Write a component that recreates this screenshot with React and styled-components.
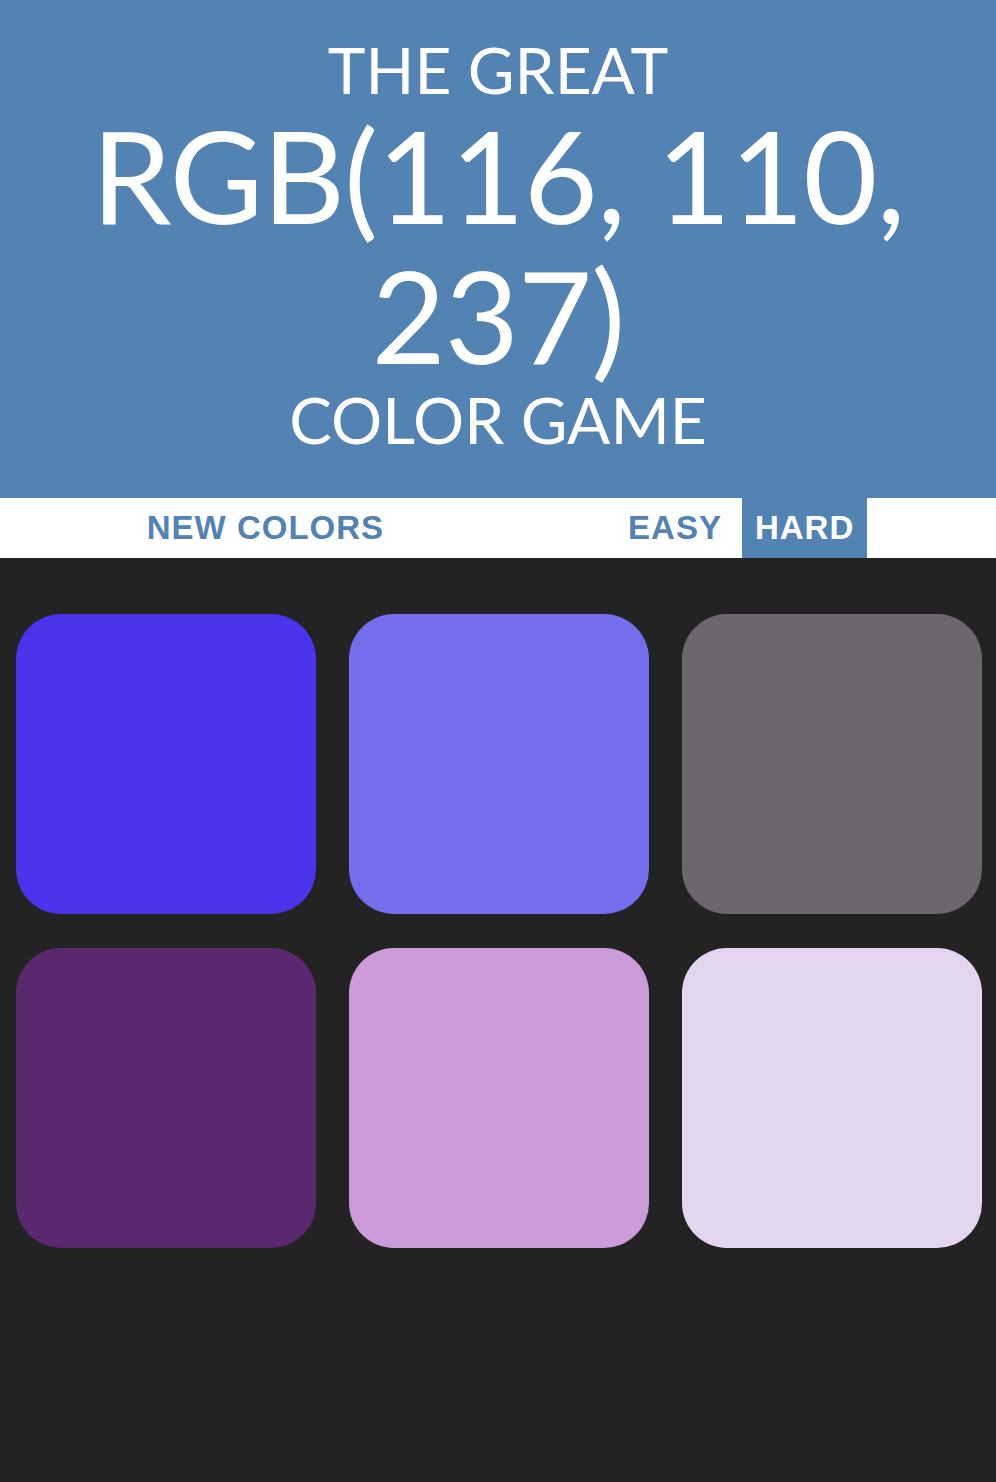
import React, { useState } from 'react'
import styled, { createGlobalStyle } from 'styled-components'

const BLUE = '#5383b2'

const GlobalStyle = createGlobalStyle`
  html, body {
    margin: 0;
    padding: 0;
    min-height: 100%;
    background: #232323;
  }
  body {
    font-family: "Lato", "Liberation Sans", sans-serif;
  }
`

const Page = styled.div`
  min-height: 1482px;
  background: #232323;
`

const Header = styled.h1`
  margin: 0;
  padding: 35px 0 43px;
  background: ${BLUE};
  color: #fff;
  text-align: center;
  text-transform: uppercase;
  font-family: "Lato", "Liberation Sans", sans-serif;
  font-weight: 400;
`

const Line = styled.div`
  font-size: 64px;
  line-height: 70px;
`

const ColorDisplay = styled.div`
  font-size: 128px;
  line-height: 140px;
  letter-spacing: -1px;
  padding: 0 60px;
`

const Stripe = styled.div`
  height: 60px;
  padding-left: 5px;
  background: #fff;
  display: flex;
  justify-content: center;
  align-items: stretch;
`

const Button = styled.button`
  border: none;
  outline: none;
  margin: 0;
  padding: 0 13px;
  height: 100%;
  background: ${p => (p.$selected ? BLUE : 'none')};
  color: ${p => (p.$selected ? '#fff' : BLUE)};
  font-family: "Liberation Sans", Arial, sans-serif;
  font-weight: 700;
  font-size: 33px;
  letter-spacing: 1px;
  text-transform: uppercase;
  cursor: pointer;
`

const Message = styled.span`
  display: inline-block;
  width: 218px;
`

const Modes = styled.div`
  display: flex;
  gap: 7px;
`

const Grid = styled.div`
  display: grid;
  grid-template-columns: repeat(3, 300px);
  column-gap: 33px;
  row-gap: 34px;
  padding: 56px 16px;
`

const Square = styled.div`
  width: 300px;
  height: 300px;
  border-radius: 45px;
  background: ${p => p.$color};
`

const colors = [
  'rgb(73, 52, 236)',
  'rgb(116, 110, 237)',
  'rgb(110, 102, 111)',
  'rgb(90, 40, 110)',
  'rgb(203, 155, 218)',
  'rgb(228, 214, 240)',
]

export default function App() {
  const [mode, setMode] = useState('hard')
  return (
    <Page>
      <GlobalStyle />
      <Header>
        <Line>The Great</Line>
        <ColorDisplay>RGB(116, 110, 237)</ColorDisplay>
        <Line>Color Game</Line>
      </Header>
      <Stripe>
        <Button>New Colors</Button>
        <Message />
        <Modes>
          <Button $selected={mode === 'easy'} onClick={() => setMode('easy')}>Easy</Button>
          <Button $selected={mode === 'hard'} onClick={() => setMode('hard')}>Hard</Button>
        </Modes>
      </Stripe>
      <Grid>
        {colors.map(c => (
          <Square key={c} $color={c} />
        ))}
      </Grid>
    </Page>
  )
}
